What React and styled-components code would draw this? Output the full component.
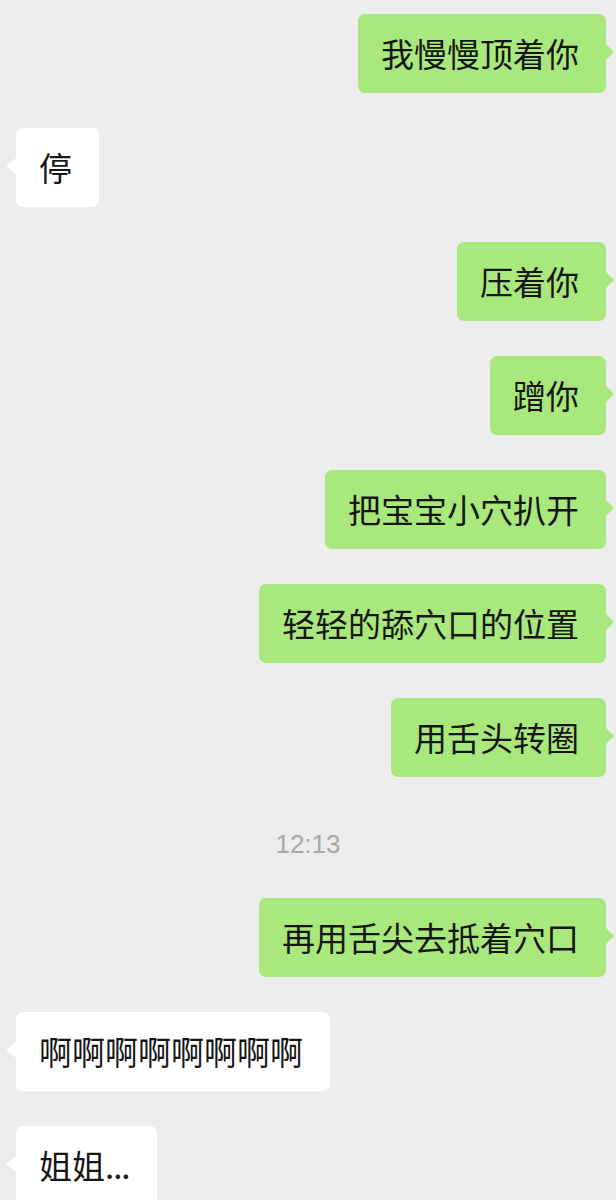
import React from "react";
import styled, { createGlobalStyle, css } from "styled-components";

const Global = createGlobalStyle`
  html, body {
    margin: 0;
    padding: 0;
    background: #ededed;
  }
  body {
    font-family: "Noto Sans CJK SC", "Noto Sans", sans-serif;
  }
`;

const Chat = styled.div`
  display: flex;
  flex-direction: column;
  gap: 35px;
  padding: 14px 0 40px;
  width: 616px;
  box-sizing: border-box;
  overflow: hidden;
`;

const Row = styled.div`
  display: flex;
  justify-content: ${(p) => (p.$mine ? "flex-end" : "flex-start")};
  padding: ${(p) => (p.$mine ? "0 10px 0 0" : "0 0 0 16px")};
`;

const Bubble = styled.div`
  position: relative;
  box-sizing: border-box;
  padding: 23px 27px 23px 23px;
  border-radius: 7px;
  font-size: 33px;
  line-height: 33px;
  color: #161616;
  white-space: nowrap;
  background: ${(p) => (p.$mine ? "#a9e87c" : "#ffffff")};

  &::after {
    content: "";
    position: absolute;
    top: 30px;
    width: 0;
    height: 0;
    border-top: 8px solid transparent;
    border-bottom: 8px solid transparent;
    ${(p) =>
      p.$mine
        ? css`
            right: -8px;
            border-left: 8px solid #a9e87c;
          `
        : css`
            left: -10px;
            border-right: 10px solid #ffffff;
          `}
  }
`;

const Dots = styled.span`
  letter-spacing: -1px;
`;

const Timestamp = styled.div`
  box-sizing: border-box;
  height: 51px;
  padding-top: 13px;
  line-height: 38px;
  text-align: center;
  font-family: "Liberation Sans", Arial, sans-serif;
  font-size: 26px;
  color: #a8a8a8;
`;

const messages = [
  { mine: true, text: "我慢慢顶着你" },
  { mine: false, text: "停" },
  { mine: true, text: "压着你" },
  { mine: true, text: "蹭你" },
  { mine: true, text: "把宝宝小穴扒开" },
  { mine: true, text: "轻轻的舔穴口的位置" },
  { mine: true, text: "用舌头转圈" },
  { time: "12:13" },
  { mine: true, text: "再用舌尖去抵着穴口" },
  { mine: false, text: "啊啊啊啊啊啊啊啊" },
  { mine: false, text: "姐姐", tail: "..." },
];

export default function App() {
  return (
    <>
      <Global />
      <Chat>
        {messages.map((m, i) =>
          m.time ? (
            <Timestamp key={i}>{m.time}</Timestamp>
          ) : (
            <Row key={i} $mine={m.mine}>
              <Bubble $mine={m.mine}>
                {m.text}
                {m.tail && <Dots>{m.tail}</Dots>}
              </Bubble>
            </Row>
          )
        )}
      </Chat>
    </>
  );
}
